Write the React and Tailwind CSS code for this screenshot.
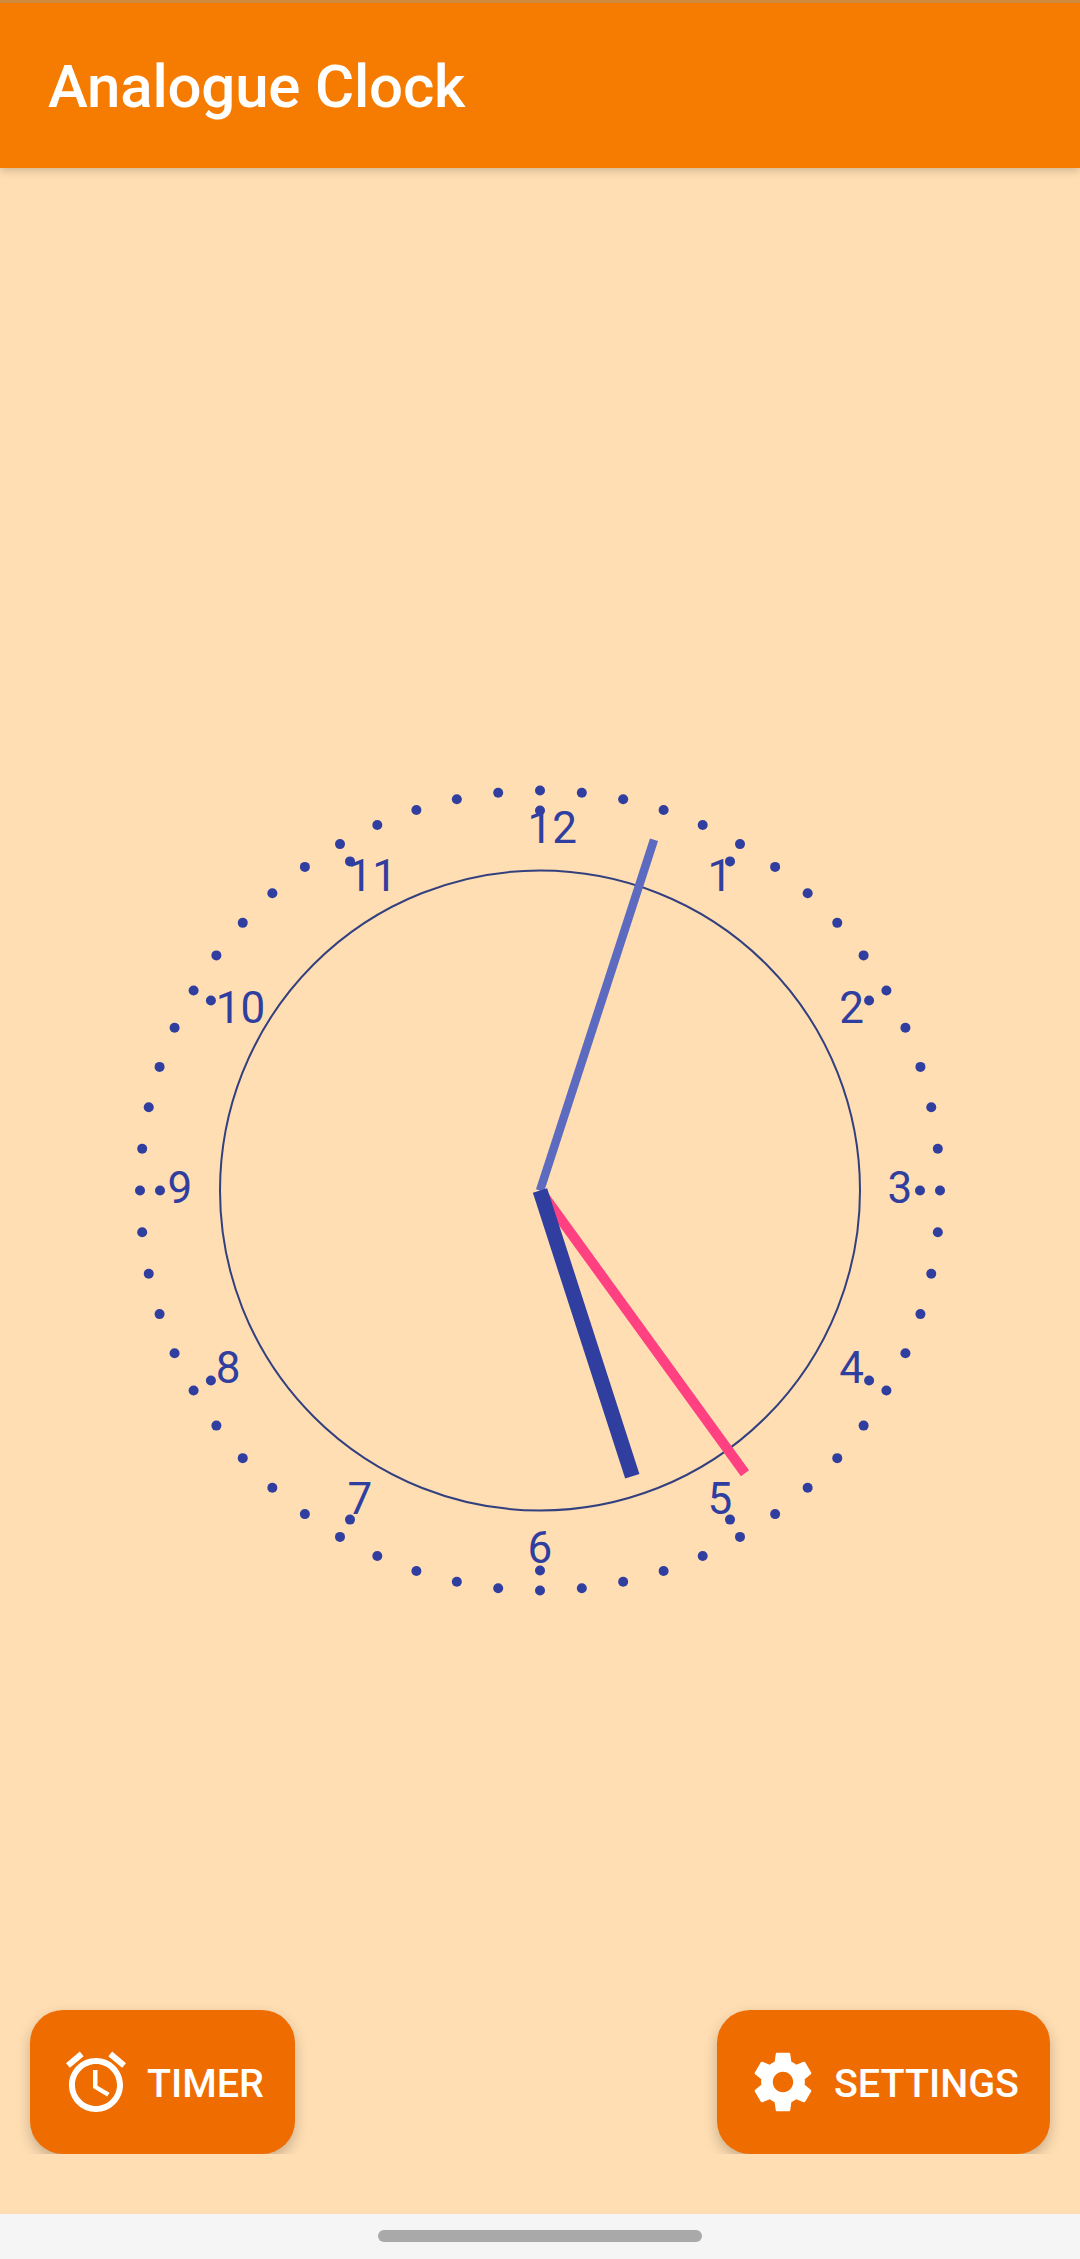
import React from 'react';

const CX = 430;
const CY = 429.5;

const toXY = (angleDeg, r) => {
    const a = (angleDeg * Math.PI) / 180;
    return [CX + r * Math.sin(a), CY - r * Math.cos(a)];
};

const Clock = () => {
    const minuteDots = Array.from({ length: 60 }, (_, i) => toXY(i * 6, 400));
    const hourDots = Array.from({ length: 12 }, (_, i) => toXY(i * 30, 380));
    const numbers = Array.from({ length: 12 }, (_, i) => {
        const [x, y] = toXY((i + 1) * 30, 360);
        return { label: i + 1, x: x - 12.5, y: y + 12 };
    });

    return (
        <svg width="860" height="860" viewBox="0 0 860 860" className="block">
            <circle cx={CX} cy={CY} r="320" fill="none" stroke="#33407f" strokeWidth="2" />
            {numbers.map((n) => (
                <text key={n.label} x={n.x} y={n.y} fontSize="44" fill="#303f9f" fontFamily="Roboto, sans-serif">
                    {n.label}
                </text>
            ))}
            {minuteDots.map(([x, y], i) => (
                <circle key={i} cx={x} cy={y} r="5" fill="#303f9f" />
            ))}
            {hourDots.map(([x, y], i) => (
                <circle key={i} cx={x} cy={y} r="5" fill="#303f9f" />
            ))}
            {/* second, minute and hour hands */}
            <line x1={CX} y1={CY} x2="635" y2="712.2" stroke="#ff4081" strokeWidth="10" />
            <line x1={CX} y1={CY} x2="544" y2="78.8" stroke="#5c6bc0" strokeWidth="8.5" />
            <line x1={CX} y1={CY} x2="522.3" y2="715.2" stroke="#303f9f" strokeWidth="15" />
        </svg>
    );
};

const AlarmIcon = () => (
    <svg width="72" height="72" viewBox="0 0 24 24" fill="currentColor">
        <path d="M22 5.72l-4.6-3.86-1.29 1.53 4.6 3.86L22 5.72zM7.88 3.39L6.6 1.86 2 5.71l1.29 1.53 4.59-3.85zM12.5 8H11v6l4.75 2.85.75-1.23-4-2.37V8zM12 4c-4.97 0-9 4.03-9 9s4.03 9 9 9 9-4.03 9-9-4.03-9-9-9zm0 16c-3.87 0-7-3.13-7-7s3.13-7 7-7 7 3.13 7 7-3.13 7-7 7z" />
    </svg>
);

const GearIcon = () => (
    <svg width="72" height="72" viewBox="-0.35 -0.35 24.7 24.7" fill="currentColor">
        <path d="M19.43 12.98c.04-.32.07-.64.07-.98s-.03-.66-.07-.98l2.11-1.65c.19-.15.24-.42.12-.64l-2-3.46c-.12-.22-.39-.3-.61-.22l-2.49 1c-.52-.4-1.08-.73-1.69-.98l-.38-2.65C14.46 2.18 14.25 2 14 2h-4c-.25 0-.46.18-.49.42l-.38 2.65c-.61.25-1.17.59-1.69.98l-2.49-1c-.23-.09-.49 0-.61.22l-2 3.46c-.13.22-.07.49.12.64l2.11 1.65c-.04.32-.07.65-.07.98s.03.66.07.98l-2.11 1.65c-.19.15-.24.42-.12.64l2 3.46c.12.22.39.3.61.22l2.49-1c.52.4 1.08.73 1.69.98l.38 2.65c.03.24.24.42.49.42h4c.25 0 .46-.18.49-.42l.38-2.65c.61-.25 1.17-.59 1.69-.98l2.49 1c.23.09.49 0 .61-.22l2-3.46c.12-.22.07-.49-.12-.64l-2.11-1.65zM12 15.5c-1.93 0-3.5-1.57-3.5-3.5s1.57-3.5 3.5-3.5 3.5 1.57 3.5 3.5-1.57 3.5-3.5 3.5z" />
    </svg>
);

const ActionButton = ({ icon, label }) => (
    <button className="flex items-center gap-[15px] h-[144px] pl-[30px] pr-[31px] rounded-[33px] bg-[#ef6c00] text-white text-[39.5px] font-medium shadow-[0_6px_14px_rgba(0,0,0,0.22)] [clip-path:inset(-20px_-20px_0_-20px)]">
        {icon}
        <span className="pt-[3px]">{label}</span>
    </button>
);

const App = () => {
    return (
        <div className="flex flex-col w-[1080px] h-[2259px] bg-[#ffdeb3] font-['Roboto',sans-serif] overflow-hidden">
            {/* App bar */}
            <header className="relative z-10 flex items-center h-[168px] pl-[48px] pt-[2px] bg-[#f57c00] border-t-[3px] border-[#cf8a40] shadow-[0_3px_8px_rgba(0,0,0,0.18)]">
                <h1 className="text-[60px] font-medium tracking-[-0.2px] text-white leading-none">Analogue Clock</h1>
            </header>

            <main className="relative flex-1 flex items-center justify-center">
                <Clock />
                <div className="absolute left-[30px] right-[30px] bottom-[60px] flex justify-between">
                    <ActionButton icon={<AlarmIcon />} label="TIMER" />
                    <ActionButton icon={<GearIcon />} label="SETTINGS" />
                </div>
            </main>

            {/* Gesture nav bar */}
            <div className="flex items-center justify-center h-[45px] bg-[#f5f5f5]">
                <div className="w-[324px] h-[12px] mt-[-1px] rounded-full bg-[#a9a9a9]"></div>
            </div>
        </div>
    );
};

export default App;
